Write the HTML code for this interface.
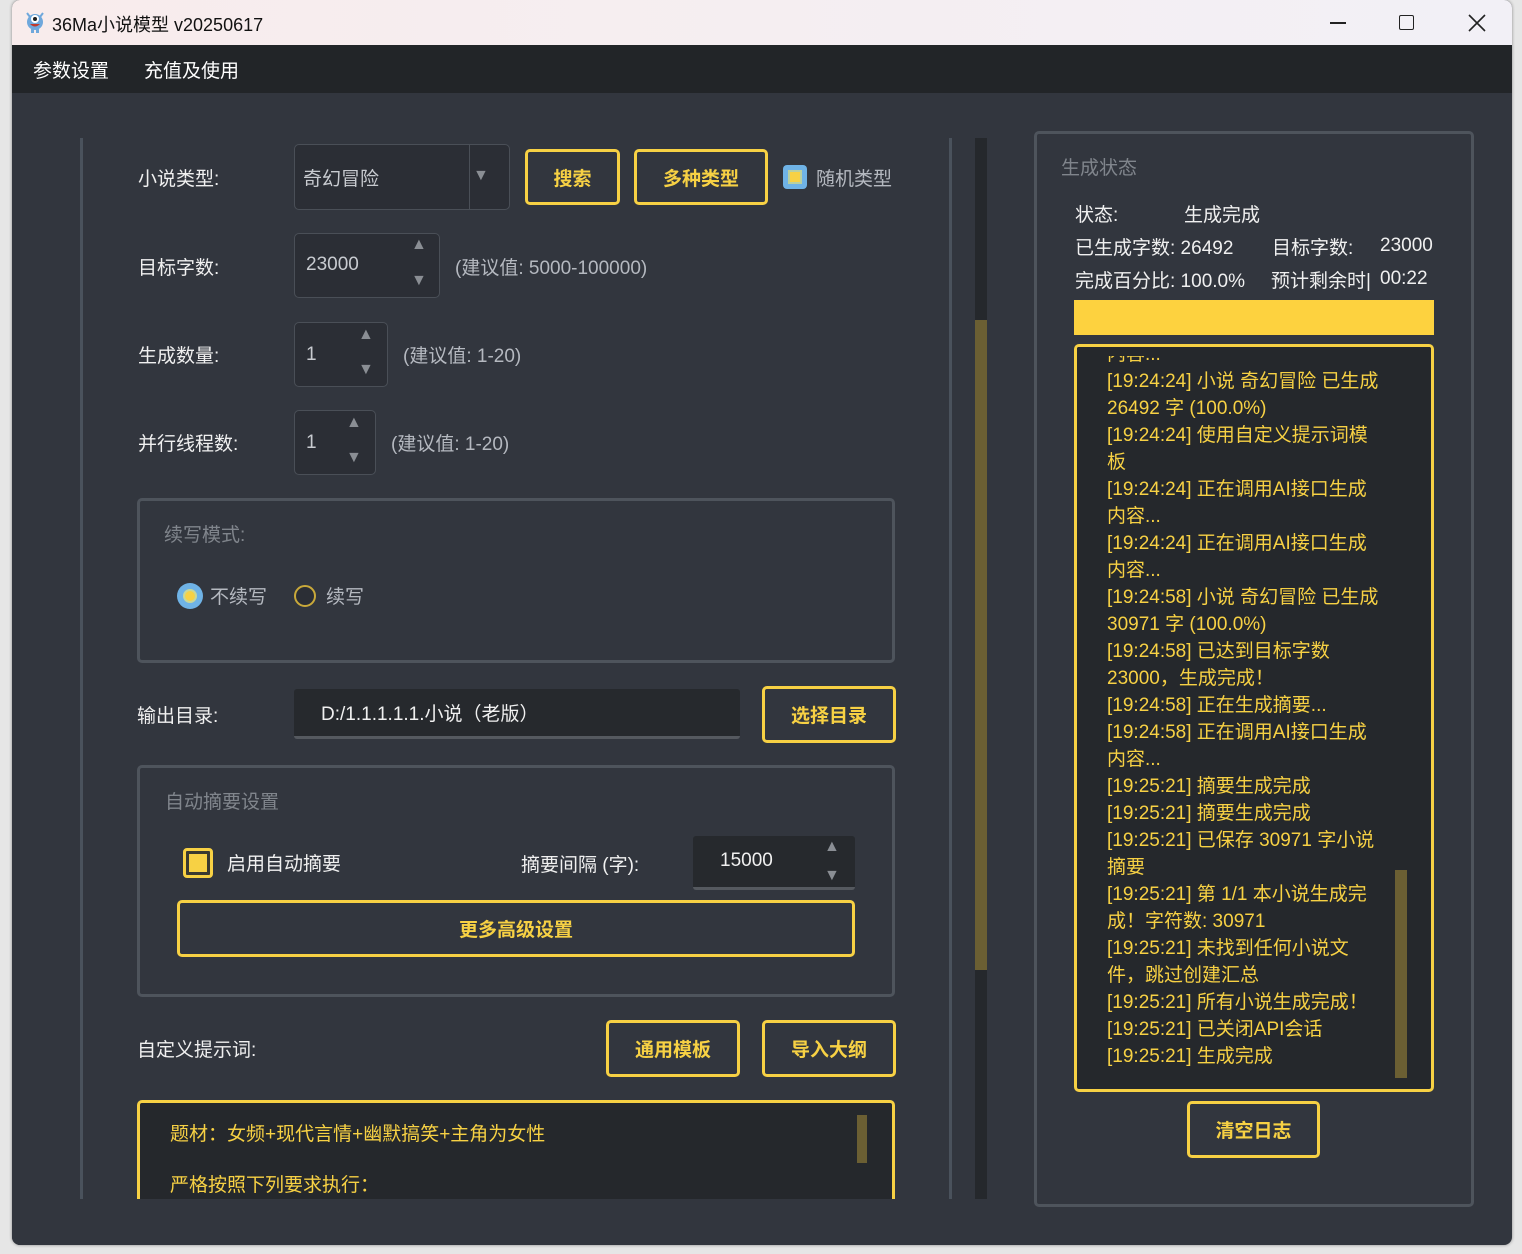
<!DOCTYPE html>
<html><head><meta charset="utf-8">
<style>
*{margin:0;padding:0;box-sizing:border-box}
body{width:1522px;height:1254px;overflow:hidden;background:#e6e6e6;font-family:"Liberation Sans","Noto Sans CJK SC",sans-serif;position:relative}
.a{position:absolute}
.win{left:12px;top:0;width:1500px;height:1245px;background:#32363e;border-radius:8px;overflow:hidden;box-shadow:0 0 3px rgba(0,0,0,.4)}
.title{left:0;top:0;width:1500px;height:45px;background:linear-gradient(90deg,#f8ecec,#f2f0f6);}
.menu{left:0;top:45px;width:1500px;height:48px;background:#222528;color:#fff;font-size:19px}
.lbl{color:#f0f0f0;font-size:19px}
.hint{color:#b5b9c0;font-size:19px}
.box{border:1px solid #4a4f57;border-radius:5px;background:#2b2e35}
.btn{border:3px solid #f7d144;border-radius:5px;color:#f7d144;font-size:19px;font-weight:bold;display:flex;align-items:center;justify-content:center;background:#32363e}
.grp{border:3px solid #4e545c;border-radius:5px}
.y{color:#f7d144}
.log div{position:absolute;left:0;font-size:19px;color:#f7d144;white-space:nowrap;line-height:27px}
.arr{color:#8a8e94;font-size:16px}
</style></head><body>
<div class="a win">
 <div class="a title">
  <div class="a" style="left:12px;top:10px;width:22px;height:24px">
   <svg width="22" height="24" viewBox="0 0 22 24"><ellipse cx="11" cy="12" rx="8" ry="8" fill="#6fa8dc"/><circle cx="11" cy="9" r="4" fill="#fff"/><circle cx="11" cy="9" r="2" fill="#222"/><path d="M6 14 Q11 19 16 14 Z" fill="#c0392b"/><path d="M3 3 L6 7 M19 3 L16 7" stroke="#6fa8dc" stroke-width="2"/><rect x="7" y="19" width="3" height="4" fill="#6fa8dc"/><rect x="12" y="19" width="3" height="4" fill="#6fa8dc"/></svg>
  </div>
  <div class="a" style="left:40px;top:11px;font-size:18px;color:#111">36Ma小说模型 v20250617</div>
  <div class="a" style="left:1318px;top:22px;width:16px;height:1.5px;background:#222"></div>
  <div class="a" style="left:1387px;top:15px;width:15px;height:15px;border:1.5px solid #222;border-radius:2px"></div>
  <svg class="a" style="left:1456px;top:14px" width="18" height="18"><path d="M1 1L17 17M17 1L1 17" stroke="#222" stroke-width="1.6"/></svg>
 </div>
 <div class="a menu"><span class="a" style="left:21px;top:11px">参数设置</span><span class="a" style="left:132px;top:11px">充值及使用</span></div>

 <div class="a" style="left:68px;top:138px;width:3px;height:1062px;background:#4a525c"></div>
 <div class="a" style="left:937px;top:138px;width:3px;height:1062px;background:#4a525c"></div>
 <div class="a" style="left:963px;top:138px;width:12px;height:1062px;background:#25282c"></div>
 <div class="a" style="left:963px;top:320px;width:12px;height:650px;background:#6b5f33"></div>

 <div class="a lbl" style="left:126px;top:164px">小说类型:</div>
 <div class="a box" style="left:282px;top:144px;width:216px;height:66px"></div>
 <div class="a" style="left:457px;top:145px;width:1px;height:64px;background:#4a4f57"></div>
 <div class="a hint" style="left:291px;top:164px;color:#c8cbd0">奇幻冒险</div>
 <div class="a arr" style="left:461px;top:167px">▼</div>
 <div class="a btn" style="left:513px;top:149px;width:95px;height:56px">搜索</div>
 <div class="a btn" style="left:622px;top:149px;width:134px;height:56px">多种类型</div>
 <div class="a" style="left:771px;top:165px;width:24px;height:24px;background:#6fb3e6;border-radius:4px"></div>
 <div class="a" style="left:776px;top:170px;width:14px;height:14px;background:#f7d144;border:2px solid #b9d0a0"></div>
 <div class="a hint" style="left:804px;top:164px">随机类型</div>

 <div class="a lbl" style="left:126px;top:253px">目标字数:</div>
 <div class="a box" style="left:282px;top:233px;width:146px;height:65px"></div>
 <div class="a" style="left:294px;top:254px;font-size:19px;color:#c8cbd0">23000</div>
 <div class="a arr" style="left:399px;top:236px">▲</div><div class="a arr" style="left:399px;top:272px">▼</div>
 <div class="a hint" style="left:443px;top:253px">(建议值: 5000-100000)</div>

 <div class="a lbl" style="left:126px;top:341px">生成数量:</div>
 <div class="a box" style="left:282px;top:322px;width:94px;height:65px"></div>
 <div class="a" style="left:294px;top:344px;font-size:19px;color:#c8cbd0">1</div>
 <div class="a arr" style="left:346px;top:326px">▲</div><div class="a arr" style="left:346px;top:361px">▼</div>
 <div class="a hint" style="left:391px;top:341px">(建议值: 1-20)</div>

 <div class="a lbl" style="left:126px;top:429px">并行线程数:</div>
 <div class="a box" style="left:282px;top:410px;width:82px;height:65px"></div>
 <div class="a" style="left:294px;top:432px;font-size:19px;color:#c8cbd0">1</div>
 <div class="a arr" style="left:334px;top:414px">▲</div><div class="a arr" style="left:334px;top:449px">▼</div>
 <div class="a hint" style="left:379px;top:429px">(建议值: 1-20)</div>

 <div class="a grp" style="left:125px;top:498px;width:758px;height:165px"></div>
 <div class="a" style="left:152px;top:520px;font-size:19px;color:#80858c">续写模式:</div>
 <div class="a" style="left:165px;top:583px;width:26px;height:26px;border-radius:50%;background:#6fb3e6"></div>
 <div class="a" style="left:171px;top:589px;width:14px;height:14px;border-radius:50%;background:#f7d144;border:2px solid #c8d89a"></div>
 <div class="a hint" style="left:198px;top:582px">不续写</div>
 <div class="a" style="left:282px;top:585px;width:22px;height:22px;border-radius:50%;border:2px solid #c9a93a;background:#2b2e35"></div>
 <div class="a hint" style="left:314px;top:582px">续写</div>

 <div class="a lbl" style="left:125px;top:701px">输出目录:</div>
 <div class="a" style="left:282px;top:689px;width:446px;height:50px;background:#26292d;border-bottom:3px solid #55595f;border-radius:3px"></div>
 <div class="a" style="left:309px;top:699px;font-size:19px;color:#f0f0f0">D:/1.1.1.1.1.小说（老版）</div>
 <div class="a btn" style="left:750px;top:686px;width:134px;height:57px">选择目录</div>

 <div class="a grp" style="left:125px;top:765px;width:758px;height:232px"></div>
 <div class="a" style="left:153px;top:787px;font-size:19px;color:#80858c">自动摘要设置</div>
 <div class="a" style="left:171px;top:848px;width:30px;height:30px;border:3px solid #f7d144;border-radius:4px;background:#3a3a30"></div>
 <div class="a" style="left:177px;top:854px;width:18px;height:18px;background:#f7d144"></div>
 <div class="a lbl" style="left:215px;top:849px">启用自动摘要</div>
 <div class="a lbl" style="left:509px;top:850px">摘要间隔 (字):</div>
 <div class="a" style="left:681px;top:836px;width:162px;height:54px;background:#26292d;border-bottom:3px solid #55595f;border-radius:3px"></div>
 <div class="a" style="left:708px;top:850px;font-size:19px;color:#f0f0f0">15000</div>
 <div class="a arr" style="left:812px;top:838px">▲</div><div class="a arr" style="left:812px;top:867px">▼</div>
 <div class="a btn" style="left:165px;top:900px;width:678px;height:57px">更多高级设置</div>

 <div class="a lbl" style="left:125px;top:1035px">自定义提示词:</div>
 <div class="a btn" style="left:594px;top:1020px;width:134px;height:57px">通用模板</div>
 <div class="a btn" style="left:750px;top:1020px;width:134px;height:57px">导入大纲</div>

 <div class="a" style="left:125px;top:1100px;width:758px;height:120px;border:3px solid #f7d144;border-radius:5px;background:#25282c"></div>
 <div class="a" style="left:845px;top:1115px;width:10px;height:48px;background:#6b5f33"></div>
 <div class="a y" style="left:158px;top:1119px;font-size:19px">题材：女频+现代言情+幽默搞笑+主角为女性</div>
 <div class="a y" style="left:158px;top:1170px;font-size:19px">严格按照下列要求执行：</div>
 <div class="a" style="left:0;top:1199px;width:1000px;height:46px;background:#32363e"></div>

 <div class="a grp" style="left:1022px;top:131px;width:440px;height:1076px"></div>
 <div class="a" style="left:1049px;top:153px;font-size:19px;color:#80858c">生成状态</div>
 <div class="a lbl" style="left:1063px;top:200px">状态:</div>
 <div class="a lbl" style="left:1172px;top:200px">生成完成</div>
 <div class="a lbl" style="left:1063px;top:233px">已生成字数: 26492</div>
 <div class="a lbl" style="left:1260px;top:233px">目标字数:</div>
 <div class="a lbl" style="left:1368px;top:235px">23000</div>
 <div class="a lbl" style="left:1063px;top:266px">完成百分比: 100.0%</div>
 <div class="a lbl" style="left:1259px;top:266px">预计剩余时|</div>
 <div class="a lbl" style="left:1368px;top:268px">00:22</div>
 <div class="a" style="left:1062px;top:300px;width:360px;height:35px;background:#fdd23f"></div>
 <div class="a" style="left:1062px;top:344px;width:360px;height:748px;border:3px solid #f7d144;border-radius:5px;background:#25282c;overflow:hidden">
  <div class="a log" style="left:30px;top:-6px;width:300px;height:740px">
   <div style="top:0">内容...</div>
   <div style="top:27px">[19:24:24] 小说 奇幻冒险 已生成</div>
   <div style="top:54px">26492 字 (100.0%)</div>
   <div style="top:81px">[19:24:24] 使用自定义提示词模</div>
   <div style="top:108px">板</div>
   <div style="top:135px">[19:24:24] 正在调用AI接口生成</div>
   <div style="top:162px">内容...</div>
   <div style="top:189px">[19:24:24] 正在调用AI接口生成</div>
   <div style="top:216px">内容...</div>
   <div style="top:243px">[19:24:58] 小说 奇幻冒险 已生成</div>
   <div style="top:270px">30971 字 (100.0%)</div>
   <div style="top:297px">[19:24:58] 已达到目标字数</div>
   <div style="top:324px">23000，生成完成！</div>
   <div style="top:351px">[19:24:58] 正在生成摘要...</div>
   <div style="top:378px">[19:24:58] 正在调用AI接口生成</div>
   <div style="top:405px">内容...</div>
   <div style="top:432px">[19:25:21] 摘要生成完成</div>
   <div style="top:459px">[19:25:21] 摘要生成完成</div>
   <div style="top:486px">[19:25:21] 已保存 30971 字小说</div>
   <div style="top:513px">摘要</div>
   <div style="top:540px">[19:25:21] 第 1/1 本小说生成完</div>
   <div style="top:567px">成！字符数: 30971</div>
   <div style="top:594px">[19:25:21] 未找到任何小说文</div>
   <div style="top:621px">件，跳过创建汇总</div>
   <div style="top:648px">[19:25:21] 所有小说生成完成！</div>
   <div style="top:675px">[19:25:21] 已关闭API会话</div>
   <div style="top:702px">[19:25:21] 生成完成</div>
  </div>
  <div class="a" style="left:0;top:0;width:354px;height:9px;background:#25282c"></div>
  <div class="a" style="left:318px;top:523px;width:12px;height:208px;background:#6b5f33"></div>
 </div>
 <div class="a btn" style="left:1175px;top:1101px;width:133px;height:57px">清空日志</div>
</div>
</body></html>
